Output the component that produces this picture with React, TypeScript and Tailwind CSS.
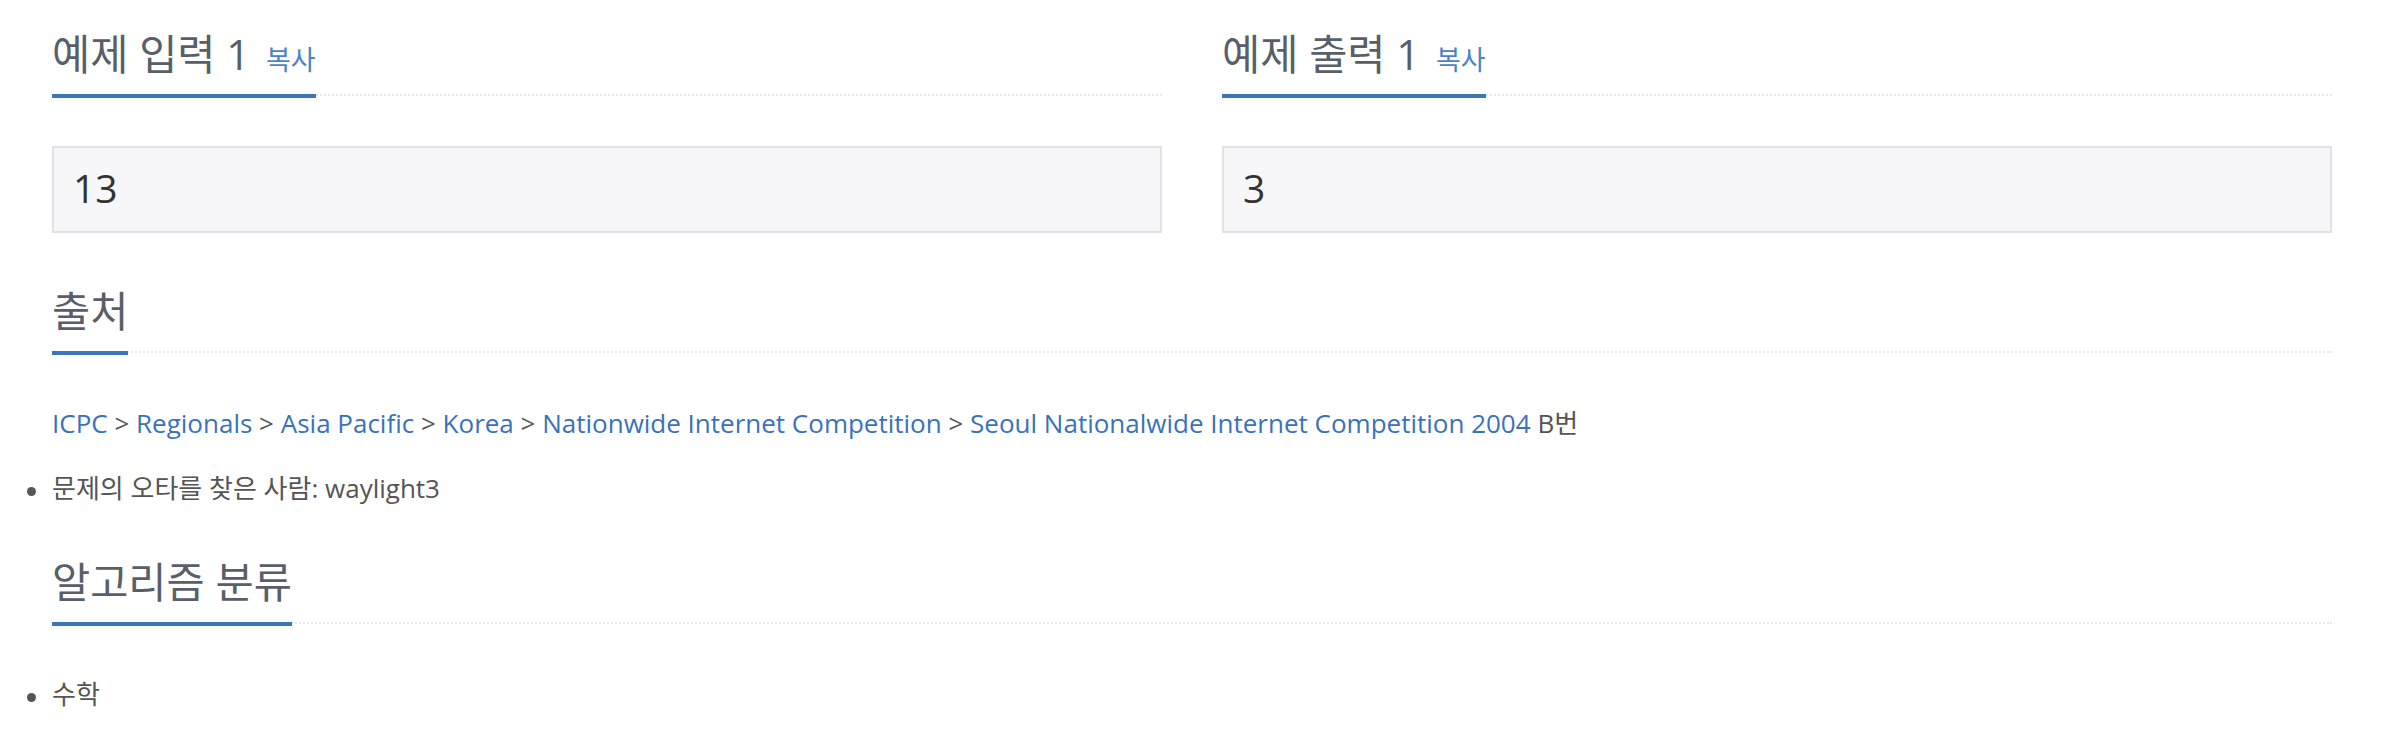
import React from "react";

const font = { fontFamily: '"Open Sans", "Noto Sans CJK KR", sans-serif' };

function Headline({ title, copy }: { title: string; copy?: boolean }) {
  return (
    <div className="border-b-2 border-dotted border-[#e4e9f0]">
      <h2 className="inline-block -mb-1 border-b-4 border-[#3b75ba] pb-[15px] text-[41.5px] leading-[50px] font-normal text-[#585f69]">
        {title}
        {copy && (
          <span className="ml-[16px] text-[27px] leading-none text-[#4a84c6] cursor-pointer">복사</span>
        )}
      </h2>
    </div>
  );
}

function Sample({ title, value }: { title: string; value: string }) {
  return (
    <div>
      <Headline title={title} copy />
      <pre
        className="mt-[50px] border-2 border-[#e1e1e8] bg-[#f7f7f9] px-[19px] pt-[12px] pb-[15px] text-[39px] leading-[56px] text-[#333]"
        style={font}
      >
        {value}
      </pre>
    </div>
  );
}

function Bullet({ children }: { children: React.ReactNode }) {
  return (
    <li className="flex items-start">
      <span className="mt-[19px] mr-[16px] h-[9px] w-[9px] shrink-0 rounded-full bg-[#555]" />
      <span>{children}</span>
    </li>
  );
}

const crumbs = [
  "ICPC",
  "Regionals",
  "Asia Pacific",
  "Korea",
  "Nationwide Internet Competition",
  "Seoul Nationalwide Internet Competition 2004",
];

export default function App() {
  return (
    <div className="min-h-screen w-[2390px] bg-white text-[26px] leading-[40px] text-[#555]" style={font}>
      <div className="ml-[52px] w-[2280px] pt-[29px]">
        {/* 예제 */}
        <div className="grid grid-cols-2 gap-[60px]">
          <Sample title="예제 입력 1" value="13" />
          <Sample title="예제 출력 1" value="3" />
        </div>

        {/* 출처 */}
        <section className="mt-[53px]">
          <Headline title="출처" />
          <p className="mt-[50px]">
            {crumbs.map((c, i) => (
              <React.Fragment key={c}>
                {i > 0 && " > "}
                <a className="text-[#3a72b8] cursor-pointer">{c}</a>
              </React.Fragment>
            ))}{" "}
            B번
          </p>
          <ul className="-ml-[25px] mt-[25px]">
            <Bullet>문제의 오타를 찾은 사람: waylight3</Bullet>
          </ul>
        </section>

        {/* 알고리즘 분류 */}
        <section className="mt-[49px]">
          <Headline title="알고리즘 분류" />
          <ul className="-ml-[25px] mt-[50px]">
            <Bullet>수학</Bullet>
          </ul>
        </section>
      </div>
    </div>
  );
}
